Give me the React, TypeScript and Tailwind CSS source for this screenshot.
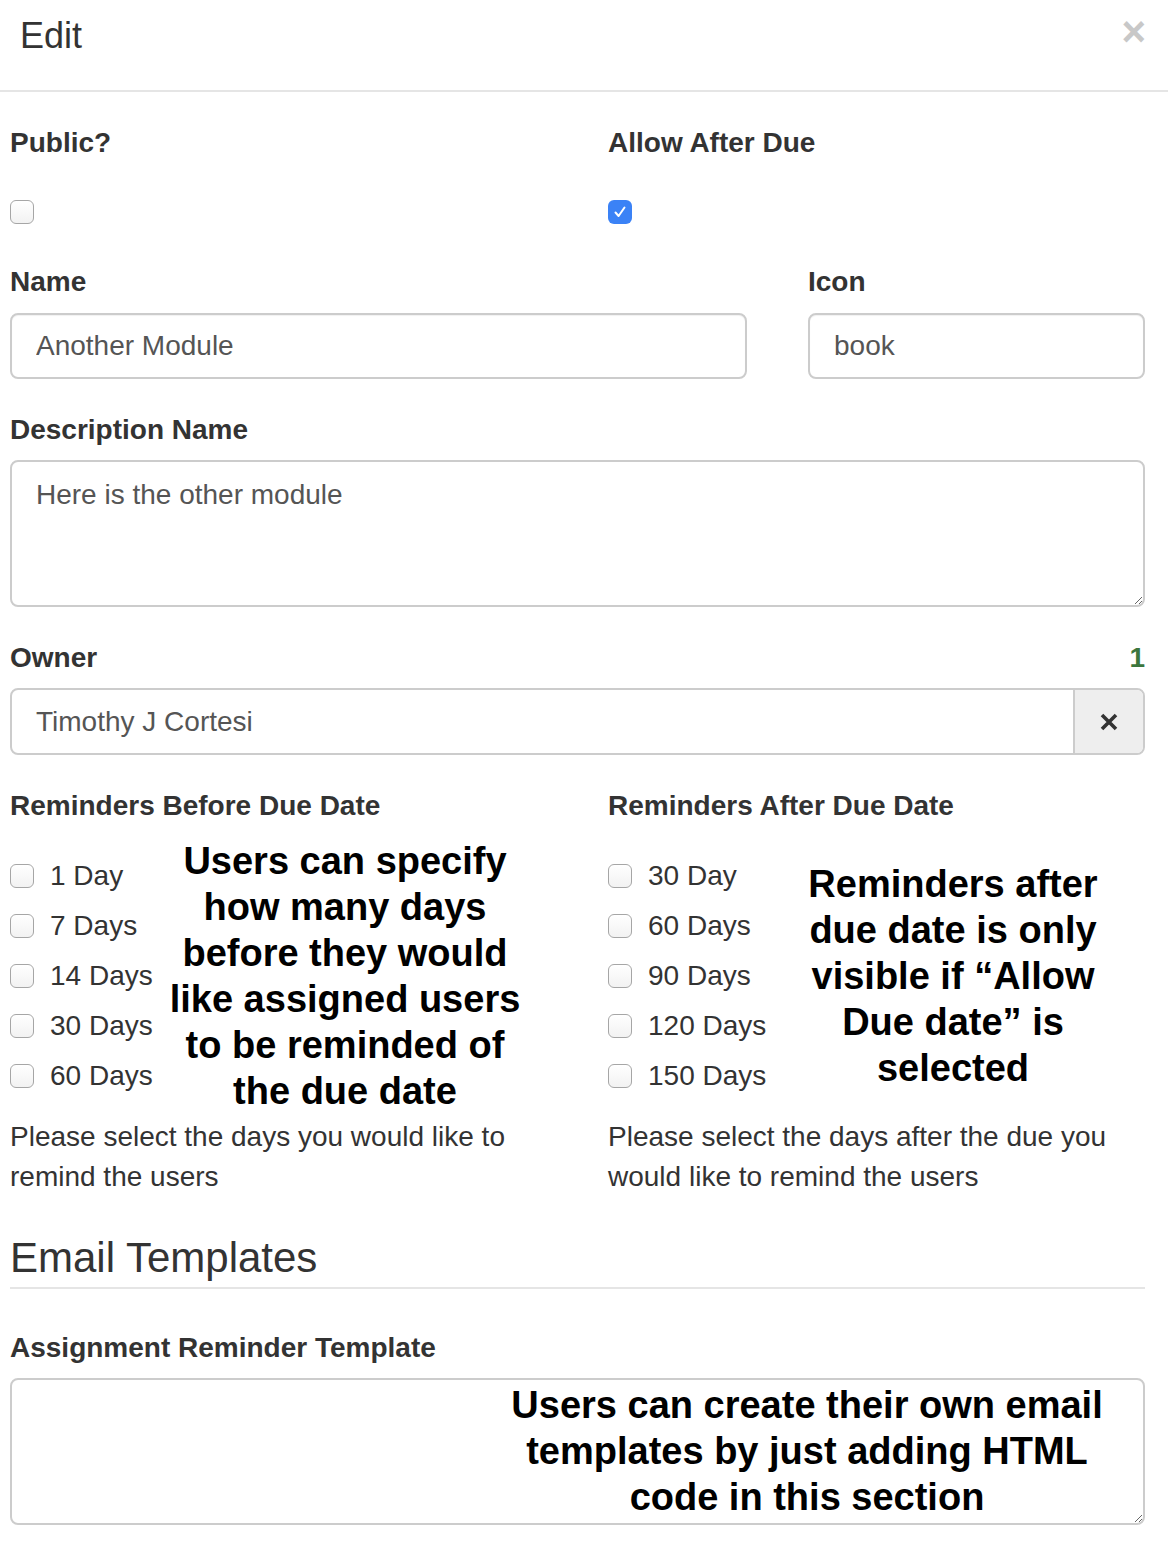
import { FC, ReactNode } from "react";

const Label: FC<{ children: ReactNode; className?: string }> = ({ children, className = "" }) => (
  <div className={`text-[28px] font-bold leading-[40px] text-[#333] ${className}`}>{children}</div>
);

const Box: FC<{ checked?: boolean }> = ({ checked }) =>
  checked ? (
    <span className="flex h-[24px] w-[24px] shrink-0 items-center justify-center rounded-[6px] bg-[#3b82f6]">
      <svg width="14" height="14" viewBox="0 0 14 14" fill="none">
        <path d="M2.5 7.5 L5.6 11 L11.5 2.5" stroke="white" strokeWidth="2" strokeLinecap="round" strokeLinejoin="round" />
      </svg>
    </span>
  ) : (
    <span className="block h-[24px] w-[24px] shrink-0 rounded-[6px] border-[1.5px] border-[#a6a6a6] bg-gradient-to-b from-white to-[#f2f2f2]" />
  );

const CheckRow: FC<{ label: string }> = ({ label }) => (
  <div className="flex h-[40px] items-center gap-[16px]">
    <Box />
    <span className="text-[28px] leading-[40px] text-[#333]">{label}</span>
  </div>
);

const Annotation: FC<{ lines: string[]; className?: string }> = ({ lines, className = "" }) => (
  <div className={`text-center text-[38px] font-bold leading-[46px] text-black ${className}`}>
    {lines.map((l) => (
      <div key={l} className="whitespace-nowrap">
        {l}
      </div>
    ))}
  </div>
);

const inputCls =
  "h-[66px] w-full rounded-[8px] border-2 border-[#ccc] bg-white px-[24px] text-[28px] text-[#555] shadow-[inset_0_1px_1px_rgba(0,0,0,0.06)] outline-none";

const App: FC = () => {
  const before = ["1 Day", "7 Days", "14 Days", "30 Days", "60 Days"];
  const after = ["30 Day", "60 Days", "90 Days", "120 Days", "150 Days"];

  return (
    <div className="min-h-[1550px] w-[1168px] bg-white font-['Liberation_Sans',Arial,sans-serif] text-[#333]">
      {/* header */}
      <div className="flex h-[92px] items-start justify-between border-b-2 border-[#e5e5e5] pl-[20px] pr-[22px] pt-[16px]">
        <h4 className="text-[36px] leading-[40px] text-[#333]">Edit</h4>
        <span className="mt-[-4px] text-[42px] font-bold leading-[40px] text-[#c8c8c8]">×</span>
      </div>

      <div className="ml-[10px] w-[1135px] pt-[31px]">
        {/* public / allow after due */}
        <div className="grid grid-cols-[598px_1fr]">
          <div>
            <Label>Public?</Label>
            <div className="mt-[37px]">
              <Box />
            </div>
          </div>
          <div>
            <Label>Allow After Due</Label>
            <div className="mt-[37px]">
              <Box checked />
            </div>
          </div>
        </div>

        {/* name / icon */}
        <div className="mt-[38px] grid grid-cols-[737px_1fr] gap-x-[61px]">
          <div>
            <Label>Name</Label>
            <input className={`${inputCls} mt-[11px]`} defaultValue="Another Module" readOnly />
          </div>
          <div>
            <Label>Icon</Label>
            <input className={`${inputCls} mt-[11px]`} defaultValue="book" readOnly />
          </div>
        </div>

        {/* description */}
        <Label className="mt-[31px]">Description Name</Label>
        <textarea
          className="mt-[10px] block h-[147px] w-full rounded-[8px] border-2 border-[#ccc] px-[24px] py-[13px] text-[28px] leading-[40px] text-[#555] outline-none"
          defaultValue="Here is the other module"
          readOnly
        />

        {/* owner */}
        <div className="mt-[31px] flex items-center justify-between">
          <Label>Owner</Label>
          <span className="text-[28px] font-bold leading-[40px] text-[#3c763d]">1</span>
        </div>
        <div className="mt-[10px] flex h-[67px] overflow-hidden rounded-[8px] border-2 border-[#ccc]">
          <div className="flex flex-1 items-center px-[24px] text-[28px] text-[#555]">Timothy J Cortesi</div>
          <div className="flex w-[70px] items-center justify-center border-l-2 border-[#ccc] bg-[#eee]">
            <svg width="18" height="18" viewBox="0 0 18 18">
              <path d="M2 2 L16 16 M16 2 L2 16" stroke="#333" strokeWidth="3.6" />
            </svg>
          </div>
        </div>

        {/* reminders */}
        <div className="mt-[31px] grid grid-cols-[598px_1fr]">
          <div>
            <Label>Reminders Before Due Date</Label>
            <div className="mt-[30px] flex h-[240px] items-start">
              <div className="flex w-[150px] flex-col gap-[10px]">
                {before.map((d) => (
                  <CheckRow key={d} label={d} />
                ))}
              </div>
              <Annotation
                className="-mt-[18px] w-[370px]"
                lines={["Users can specify", "how many days", "before they would", "like assigned users", "to be reminded of", "the due date"]}
              />
            </div>
            <p className="mt-[21px] text-[28px] leading-[40px] text-[#333]">
              Please select the days you would like to
              <br />
              remind the users
            </p>
          </div>
          <div>
            <Label>Reminders After Due Date</Label>
            <div className="mt-[30px] flex h-[240px] items-start">
              <div className="flex w-[160px] flex-col gap-[10px]">
                {after.map((d) => (
                  <CheckRow key={d} label={d} />
                ))}
              </div>
              <Annotation
                className="mt-[5px] w-[370px]"
                lines={["Reminders after", "due date is only", "visible if \u201CAllow", "Due date\u201D is", "selected"]}
              />
            </div>
            <p className="mt-[21px] text-[28px] leading-[40px] text-[#333]">
              Please select the days after the due you
              <br />
              would like to remind the users
            </p>
          </div>
        </div>

        {/* email templates */}
        <h3 className="mt-[32px] border-b-2 border-[#e5e5e5] text-[42px] leading-[58px] text-[#333]">Email Templates</h3>
        <Label className="mt-[39px]">Assignment Reminder Template</Label>
        <div className="relative mt-[10px]">
          <textarea className="block h-[147px] w-full rounded-[8px] border-2 border-[#ccc] px-[24px] py-[12px] text-[28px] text-[#555] outline-none" readOnly />
          <Annotation
            className="absolute left-[497px] top-[4px] w-[600px]"
            lines={["Users can create their own email", "templates by just adding HTML", "code in this section"]}
          />
        </div>
      </div>
    </div>
  );
};

export default App;
